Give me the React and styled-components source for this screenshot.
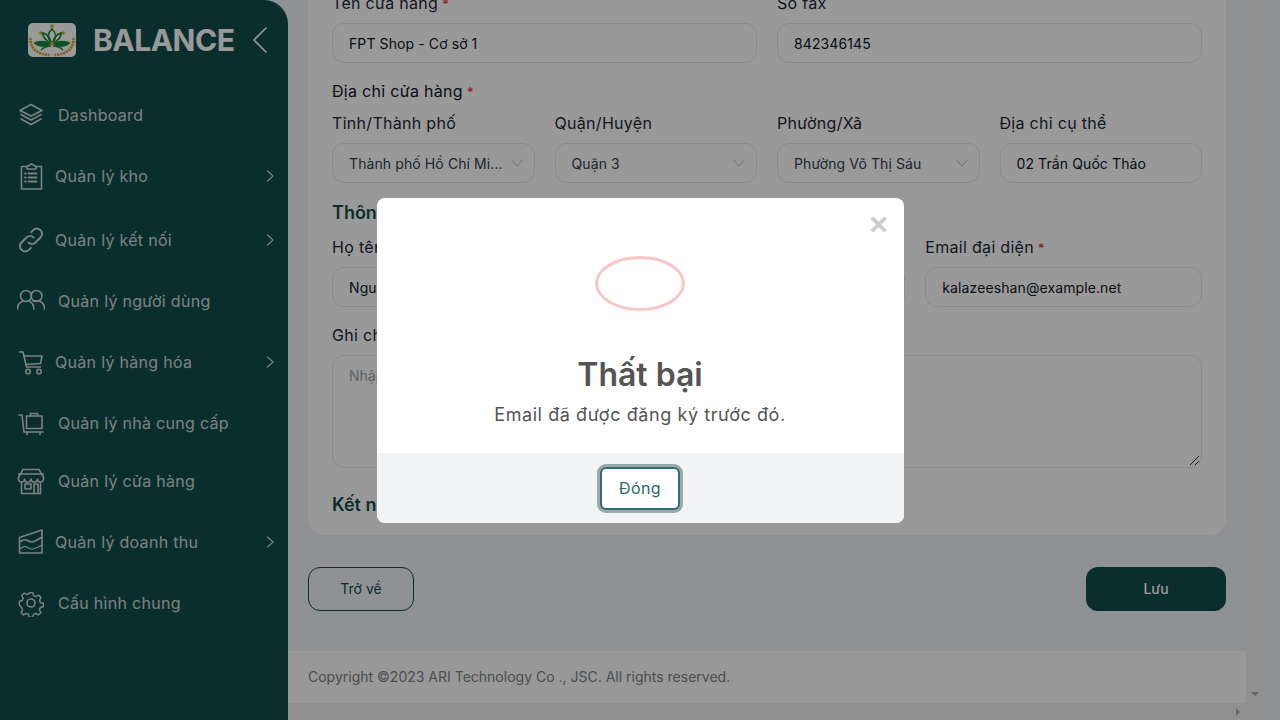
import React from "react";
import styled, { createGlobalStyle } from "styled-components";

const FONT = `Inter, "Noto Sans", "Liberation Sans", sans-serif`;

const Global = createGlobalStyle`
  html, body { margin: 0; padding: 0; height: 720px; overflow: hidden; background: #f0f2f7; }
  * { box-sizing: border-box; }
  body { font-family: ${FONT}; }
`;

const Page = styled.div`
  position: relative;
  display: flex;
  width: 1280px;
  height: 720px;
  overflow: hidden;
  background: #f0f2f7;
`;

const Sidebar = styled.aside`
  width: 288px;
  flex: none;
  height: 720px;
  background: #124e4c;
  border-top-right-radius: 24px;
  color: #fff;
`;

const Brand = styled.div`
  display: flex;
  align-items: center;
  height: 80px;
  padding: 0 0 0 28px;
`;

const BrandName = styled.span`
  margin-left: 17px;
  font-size: 30px;
  font-weight: 700;
  letter-spacing: -0.5px;
  width: 159px;
  white-space: nowrap;
`;

const Menu = styled.nav`
  display: flex;
  flex-direction: column;
  padding-top: 4px;
`;

const Item = styled.a`
  display: flex;
  align-items: center;
  height: 61px;
  margin-top: ${(p) => p.$shift || 0}px;
  padding-left: 17px;
  padding-right: 12px;
  font-size: 16px;
  font-weight: 400;
  letter-spacing: 0.3px;
  opacity: 0.78;
`;

const IconBox = styled.span`
  display: flex;
  width: 28px;
  height: 28px;
  flex: none;
  align-items: center;
  justify-content: center;
  margin-right: ${(p) => (p.$arrow ? 10 : 13)}px;
`;

const ItemLabel = styled.span`
  flex: 1;
  white-space: nowrap;
`;

const MainColumn = styled.div`
  flex: 1;
  min-width: 0;
  display: flex;
  flex-direction: column;
  height: 720px;
`;

const ScrollRow = styled.div`
  flex: 1;
  min-height: 0;
  display: flex;
`;

const Content = styled.main`
  flex: 1;
  min-width: 0;
  display: flex;
  flex-direction: column;
  overflow: hidden;
`;

const Sheet = styled.div`
  flex: 1;
  padding: 0 20px;
`;

const Card = styled.section`
  margin-top: -37px;
  height: 572px;
  background: #fff;
  border-radius: 0 0 16px 16px;
  padding: 28px 24px 0;
`;

const Row = styled.div`
  display: grid;
  grid-template-columns: repeat(${(p) => p.$cols}, 1fr);
  gap: 20px;
  margin-bottom: ${(p) => p.$mb || 0}px;
`;

const Field = styled.div`
  display: flex;
  flex-direction: column;
  min-width: 0;
`;

const Label = styled.label`
  font-size: 16px;
  line-height: 24px;
  margin-bottom: 8px;
  letter-spacing: 0.3px;
  color: #1f2937;
  white-space: nowrap;
`;

const GroupLabel = styled(Label)`
  display: block;
  color: #111827;
`;

const Req = styled.span`
  color: #dc2626;
  font-size: 13px;
  line-height: 0;
`;

const Input = styled.div`
  height: 40px;
  border: 1px solid #e5e7eb;
  border-radius: 12px;
  padding: ${(p) => (p.$muted ? "0 10px 0 16px" : "0 16px")};
  display: flex;
  align-items: center;
  justify-content: space-between;
  font-size: 14px;
  letter-spacing: 0.1px;
  color: ${(p) => (p.$muted ? "#374151" : "#111827")};
  overflow: hidden;
  background: #fff;
`;

const InputText = styled.span`
  white-space: nowrap;
  overflow: hidden;
`;

const TextArea = styled.div`
  position: relative;
  height: 113px;
  border: 1px solid #e5e7eb;
  border-radius: 12px;
  padding: 8px 16px;
  font-size: 14px;
  line-height: 24px;
  color: #9ca3af;
`;

const Grip = styled.svg`
  position: absolute;
  right: 1px;
  bottom: 1px;
`;

const SectionTitle = styled.h3`
  margin: ${(p) => p.$mt}px 0 ${(p) => p.$mb}px;
  font-size: 18px;
  line-height: 24px;
  font-weight: 600;
  color: #124e4c;
`;

const Actions = styled.div`
  display: flex;
  justify-content: space-between;
  margin-top: 32px;
`;

const BackBtn = styled.button`
  width: 106px;
  height: 44px;
  padding: 0 0 2px;
  border: 1px solid #124e4c;
  border-radius: 12px;
  background: transparent;
  font: 400 14px ${FONT};
  color: #124e4c;
`;

const SaveBtn = styled.button`
  width: 140px;
  height: 44px;
  padding: 0 0 2px;
  border: 0;
  border-radius: 12px;
  background: #124e4c;
  font: 500 14px ${FONT};
  color: #fff;
`;

const Footer = styled.footer`
  flex: none;
  height: 52px;
  background: #fdfdfd;
  padding: 0 20px 1px;
  display: flex;
  align-items: center;
  font-size: 14px;
  color: #7d8284;
`;

const VBar = styled.div`
  width: 17px;
  flex: none;
  background: #f1f1f1;
  position: relative;
`;

const HBar = styled.div`
  height: 17px;
  flex: none;
  background: #f1f1f1;
  position: relative;
`;

const Arrow = styled.span`
  position: absolute;
  width: 0;
  height: 0;
  ${(p) =>
    p.$dir === "down"
      ? `right: 4px; bottom: 7px; border-left: 4px solid transparent; border-right: 4px solid transparent; border-top: 4px solid #a3a3a3;`
      : `right: 23px; bottom: 4px; border-top: 4px solid transparent; border-bottom: 4px solid transparent; border-left: 4px solid #a3a3a3;`}
`;

const Edge = styled.div`
  width: 17px;
  flex: none;
  height: 720px;
  background: #eff1f5;
`;

const Overlay = styled.div`
  position: absolute;
  inset: 0;
  background: rgba(0, 0, 0, 0.4);
  display: flex;
  align-items: flex-start;
  justify-content: center;
  padding-top: 198px;
`;

const Modal = styled.div`
  position: relative;
  width: 527px;
  height: 325px;
  background: #fff;
  border-radius: 8px;
  overflow: hidden;
  display: flex;
  flex-direction: column;
  align-items: center;
`;

const Close = styled.span`
  position: absolute;
  top: 8px;
  right: 13px;
  font: 700 32px/36px "Liberation Sans", sans-serif;
  width: 24px;
  text-align: center;
  color: #cccccc;
`;

const Ring = styled.div`
  margin-top: 58px;
  width: 90px;
  height: 55px;
  border: 3px solid #fac5c5;
  border-radius: 50%;
`;

const ModalTitle = styled.h2`
  margin: 44px 0 0;
  font-size: 32px;
  line-height: 40px;
  font-weight: 600;
  color: #545454;
`;

const ModalText = styled.p`
  margin: 7px 0 0;
  font-size: 18px;
  line-height: 26px;
  letter-spacing: 0.58px;
  color: #545454;
`;

const ModalFoot = styled.div`
  margin-top: auto;
  align-self: stretch;
  height: 70px;
  background: #f3f4f6;
  display: flex;
  align-items: center;
  justify-content: center;
`;

const CloseBtn = styled.button`
  width: 80px;
  height: 43px;
  background: #fff;
  border: 2px solid #2f6f6d;
  border-radius: 6px;
  box-shadow: 0 0 0 3px rgba(80, 110, 110, 0.55);
  font: 400 16px ${FONT};
  letter-spacing: 0.4px;
  color: #266a68;
`;

const Ico = ({ children, w = 28, h = 28, vb = "0 0 28 28" }) => (
  <svg width={w} height={h} viewBox={vb} fill="none" stroke="#fff" strokeWidth="1.6" strokeLinecap="round" strokeLinejoin="round">
    {children}
  </svg>
);

const Chevron = ({ size = 12 }) => (
  <svg width={size} height={size + 6} viewBox="0 0 12 18" fill="none" stroke="#fff" strokeWidth="1.2" strokeLinecap="round" strokeLinejoin="round">
    <path d="M3.5 4 9 9 3.5 14" />
  </svg>
);

const SelectArrow = () => (
  <svg width="14" height="8" viewBox="0 0 14 8" fill="none" stroke="#c4c8ce" strokeWidth="1.1" style={{ flex: "none" }}>
    <path d="M1.5 1 7 7l5.5-6" />
  </svg>
);

const Layers = () => (
  <Ico><path d="M14 3.5 25 9.5 14 15 3 9.5Z" /><path d="M4 13.5l10 5.5 10-5.5" /><path d="M4 18l10 5.5L24 18" /></Ico>
);
const Clipboard = () => (
  <Ico>
    <path d="M10 4.500H4.500v22.500h20V4.500H19" /><path d="M10 7V4.500l4.500-2.500L19 4.500V7Z" />
    <path d="M11.500 11.500h8M11.500 15.500h8M11.500 19.500h8" strokeWidth="1.800" /><path d="M8 11.500h.8M8 15.500h.8M8 19.500h.8" strokeWidth="1.800" />
  </Ico>
);
const LinkIco = () => (
  <Ico>
    <g strokeWidth="2">
      <path d="M11.500 16.500a5 5 0 0 0 7 0l5-5a5.200 5.200 0 0 0-7.400-7.400l-2 2" />
      <path d="M16.500 11.500a5 5 0 0 0-7 0l-5 5a5.200 5.200 0 0 0 7.400 7.400l2-2" />
    </g>
  </Ico>
);
const Users = () => (
  <Ico>
    <circle cx="9" cy="9" r="5.500" /><circle cx="19.500" cy="9" r="5.500" />
    <path d="M.5 22c0-4 2.500-6.800 5.500-7.800M12 14.200c2.800 1 4.800 3.800 4.800 7.800" /><path d="M16.500 14.300c2-.5 4-.5 6 0 3 1 5 3.800 5 7.700" />
  </Ico>
);
const Cart = () => (
  <Ico>
    <path d="M2.500 4H6l3.500 15h14" /><path d="M7 8h18l-1.500 7.500-14.700 1" />
    <circle cx="11" cy="23.500" r="2.300" /><circle cx="22" cy="23.500" r="2.300" />
  </Ico>
);
const Trolley = () => (
  <Ico>
    <path d="M2 6h3l2 17h19" /><rect x="9.500" y="7" width="15.500" height="12.500" />
    <path d="M13.500 7V4.500h7V7" /><path d="M10 23v2.500M23 23v2.500" />
  </Ico>
);
const Store = () => (
  <Ico>
    <path d="M6 2.500h16l4.500 8v1.500a3 3 0 0 1-6 0 3 3 0 0 1-6.500 0 3 3 0 0 1-6.500 0 3 3 0 0 1-6 0v-1.500Z" />
    <path d="M1.500 7h25" /><path d="M4.500 16v10.500h19V16" /><rect x="8" y="17" width="6" height="5" /><path d="M17 26.500V17h4v9.500" />
  </Ico>
);
const Chart = () => (
  <Ico>
    <path d="M2.500 9.500v15.500h22.500V2L2.500 9.500" /><path d="M2.500 14c4-3 6-3 9-1s6 1 13.500-4" /><path d="M2.500 21c4-3 6-3 9-1s6 1 13.500-3" strokeWidth="1.200" />
  </Ico>
);
const Gear = () => (
  <Ico>
    <circle cx="14" cy="14" r="4" />
    <path d="M12 2.500h4l.8 3.300 2.600 1.100 2.900-1.800 2.800 2.900-1.700 2.800 1 2.600 3.300.8v4l-3.300.8-1.100 2.600 1.800 2.900-2.900 2.800-2.800-1.700-2.600 1-.8 3.300h-4l-.8-3.300-2.600-1.100-2.900 1.800-2.800-2.900 1.700-2.800-1-2.600L1 16v-4l3.300-.8 1.100-2.600-1.800-2.900 2.900-2.800 2.800 1.700 2.600-1z" transform="translate(1.400 1.400) scale(.9)" />
  </Ico>
);

const Star = ({ x, y, r = 2.8 }) => (
  <polygon
    fill="#e0a526"
    points={Array.from({ length: 10 }, (_, i) => {
      const a = (Math.PI / 5) * i - Math.PI / 2;
      const rr = i % 2 ? r * 0.42 : r;
      return `${x + rr * Math.cos(a)},${y + rr * Math.sin(a)}`;
    }).join(" ")}
  />
);

const Logo = () => (
  <svg width="48" height="34" viewBox="0 0 48 34" style={{ flex: "none" }}>
    <rect width="48" height="34" rx="5" fill="#fff" />
    <Star x={24} y={3} /><Star x={13} y={10} /><Star x={35} y={10} /><Star x={8} y={20} /><Star x={40} y={20} />
    <g fill="none" stroke="#14893a" strokeWidth="1.700">
      <path d="M24 20C19 15 19 11 24 6c5 5 5 9 0 14Z" />
      <path d="M23 20c-1-6-4-9-8-10 0 5 3 8 8 10Z" /><path d="M25 20c1-6 4-9 8-10 0 5-3 8-8 10Z" />
      <path d="M22 21c-4-3-9-3-15-1 4 4 10 4 15 1Z" fill="#14893a" /><path d="M26 21c4-3 9-3 15-1-4 4-10 4-15 1Z" fill="#14893a" />
      <path d="M13 27c3-3 7-4 10-4M35 27c-3-3-7-4-10-4" />
    </g>
    <circle cx="24" cy="20.500" r="2" fill="#e0a526" />
    <g fill="none" stroke="#d9a520" strokeWidth="2.600" strokeDasharray="2.200 .8">
      <path d="M2.500 15c-1 9 6 16.500 19 17" /><path d="M45.500 15c1 9-6 16.500-19 17" />
    </g>
  </svg>
);

const menu = [
  { label: "Dashboard", icon: <Layers /> },
  { label: "Quản lý kho", icon: <Clipboard />, arrow: true },
  { label: "Quản lý kết nối", icon: <LinkIco />, arrow: true, shift: 3 },
  { label: "Quản lý người dùng", icon: <Users /> },
  { label: "Quản lý hàng hóa", icon: <Cart />, arrow: true },
  { label: "Quản lý nhà cung cấp", icon: <Trolley /> },
  { label: "Quản lý cửa hàng", icon: <Store />, shift: -3 },
  { label: "Quản lý doanh thu", icon: <Chart />, arrow: true },
  { label: "Cấu hình chung", icon: <Gear /> },
];

const LabeledInput = ({ label, value, req }) => (
  <Field>
    <Label>{label}{req && <Req> *</Req>}</Label>
    <Input><InputText>{value}</InputText></Input>
  </Field>
);

const LabeledSelect = ({ label, value }) => (
  <Field>
    <Label>{label}</Label>
    <Input $muted><InputText>{value}</InputText><SelectArrow /></Input>
  </Field>
);

export default function App() {
  return (
    <Page>
      <Global />
      <Sidebar>
        <Brand>
          <Logo />
          <BrandName>BALANCE</BrandName>
          <svg width="16" height="28" viewBox="0 0 16 28" fill="none" stroke="#fff" strokeWidth="1.600" strokeLinecap="round" strokeLinejoin="round">
            <path d="M14 2 2 14l12 12" />
          </svg>
        </Brand>
        <Menu>
          {menu.map((m) => (
            <Item key={m.label} $shift={m.shift}>
              <IconBox $arrow={m.arrow}>{m.icon}</IconBox>
              <ItemLabel>{m.label}</ItemLabel>
              {m.arrow && <Chevron />}
            </Item>
          ))}
        </Menu>
      </Sidebar>

      <MainColumn>
        <ScrollRow>
          <Content>
            <Sheet>
              <Card>
                <Row $cols={2} $mb={16}>
                  <LabeledInput label="Tên cửa hàng" value="FPT Shop - Cơ sở 1" req />
                  <LabeledInput label="Số fax" value="842346145" />
                </Row>
                <GroupLabel>Địa chỉ cửa hàng<Req> *</Req></GroupLabel>
                <Row $cols={4}>
                  <LabeledSelect label="Tỉnh/Thành phố" value="Thành phố Hồ Chí Mi..." />
                  <LabeledSelect label="Quận/Huyện" value="Quận 3" />
                  <LabeledSelect label="Phường/Xã" value="Phường Võ Thị Sáu" />
                  <LabeledInput label="Địa chỉ cụ thể" value="02 Trần Quốc Thảo" />
                </Row>
                <SectionTitle $mt={18} $mb={10}>Thông tin liên hệ</SectionTitle>
                <Row $cols={3} $mb={16}>
                  <LabeledInput label="Họ tên" value="Nguyễn Văn An" req />
                  <LabeledInput label="Số điện thoại" value="0901234567" req />
                  <LabeledInput label="Email đại diện" value="kalazeeshan@example.net" req />
                </Row>
                <Field>
                  <Label>Ghi chú</Label>
                  <TextArea>
                    Nhập ghi chú
                    <Grip width="12" height="12" viewBox="0 0 12 12" fill="none" stroke="#333" strokeWidth="1">
                      <path d="M2 11 11 2M7 11l4-4" />
                    </Grip>
                  </TextArea>
                </Field>
                <SectionTitle $mt={25} $mb={0}>Kết nối</SectionTitle>
              </Card>
              <Actions>
                <BackBtn>Trở về</BackBtn>
                <SaveBtn>Lưu</SaveBtn>
              </Actions>
            </Sheet>
            <Footer>Copyright ©2023 ARI Technology Co ., JSC. All rights reserved.</Footer>
          </Content>
          <VBar><Arrow $dir="down" /></VBar>
        </ScrollRow>
        <HBar><Arrow $dir="right" /></HBar>
      </MainColumn>
      <Edge />

      <Overlay>
        <Modal>
          <Close>×</Close>
          <Ring />
          <ModalTitle>Thất bại</ModalTitle>
          <ModalText>Email đã được đăng ký trước đó.</ModalText>
          <ModalFoot><CloseBtn>Đóng</CloseBtn></ModalFoot>
        </Modal>
      </Overlay>
    </Page>
  );
}
